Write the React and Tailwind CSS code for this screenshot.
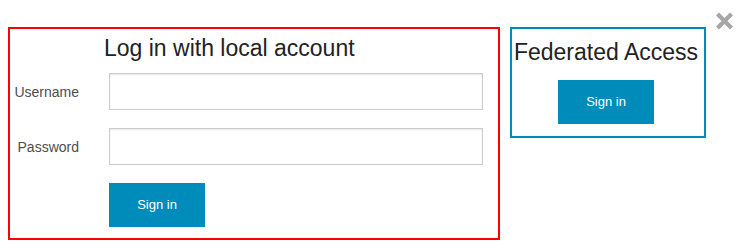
import React from "react";

export default function App() {
  return (
    <div className="relative w-[748px] h-[246px] bg-white font-['Liberation_Sans',Arial,sans-serif]">
      <div className="flex items-start pt-[27px] pl-[8px] gap-[10px]">
        <div className="w-[492px] h-[213px] border-2 border-[#ff0000] flex flex-col">
          <h2 className="mt-[6px] pl-[94px] text-[23px] leading-[26px] text-[#222222]">
            Log in with local account
          </h2>
          <div className="mt-[12px] flex flex-col gap-[18px]">
            <div className="flex items-center gap-[30px]">
              <label className="w-[69px] pt-[2px] text-right text-[14px] text-[#4d4d4d]">Username</label>
              <input
                type="text"
                className="w-[374px] h-[37px] border border-[#cccccc] bg-white shadow-[inset_0_1px_2px_rgba(0,0,0,0.1)] outline-none"
              />
            </div>
            <div className="flex items-center gap-[30px]">
              <label className="w-[69px] pt-[2px] text-right text-[14px] text-[#4d4d4d]">Password</label>
              <input
                type="password"
                className="w-[374px] h-[37px] border border-[#cccccc] bg-white shadow-[inset_0_1px_2px_rgba(0,0,0,0.1)] outline-none"
              />
            </div>
            <div className="pl-[99px]">
              <button className="w-[96px] h-[44px] bg-[#008cba] text-white text-[13px]">Sign in</button>
            </div>
          </div>
        </div>
        <div className="w-[196px] h-[111px] border-2 border-[#008cba] flex flex-col items-center pr-[4px]">
          <h2 className="mt-[10px] text-[23px] leading-[26px] text-[#222222] whitespace-nowrap">Federated Access</h2>
          <button className="mt-[15px] w-[96px] h-[44px] bg-[#008cba] text-white text-[13px]">Sign in</button>
        </div>
      </div>
      <svg
        className="absolute left-[715px] top-[12px]"
        width="19"
        height="18"
        viewBox="0 0 19 18"
      >
        <path d="M2.5 2 L16.5 16 M16.5 2 L2.5 16" stroke="#a6a6a6" strokeWidth="4.2" strokeLinecap="butt" />
      </svg>
    </div>
  );
}
